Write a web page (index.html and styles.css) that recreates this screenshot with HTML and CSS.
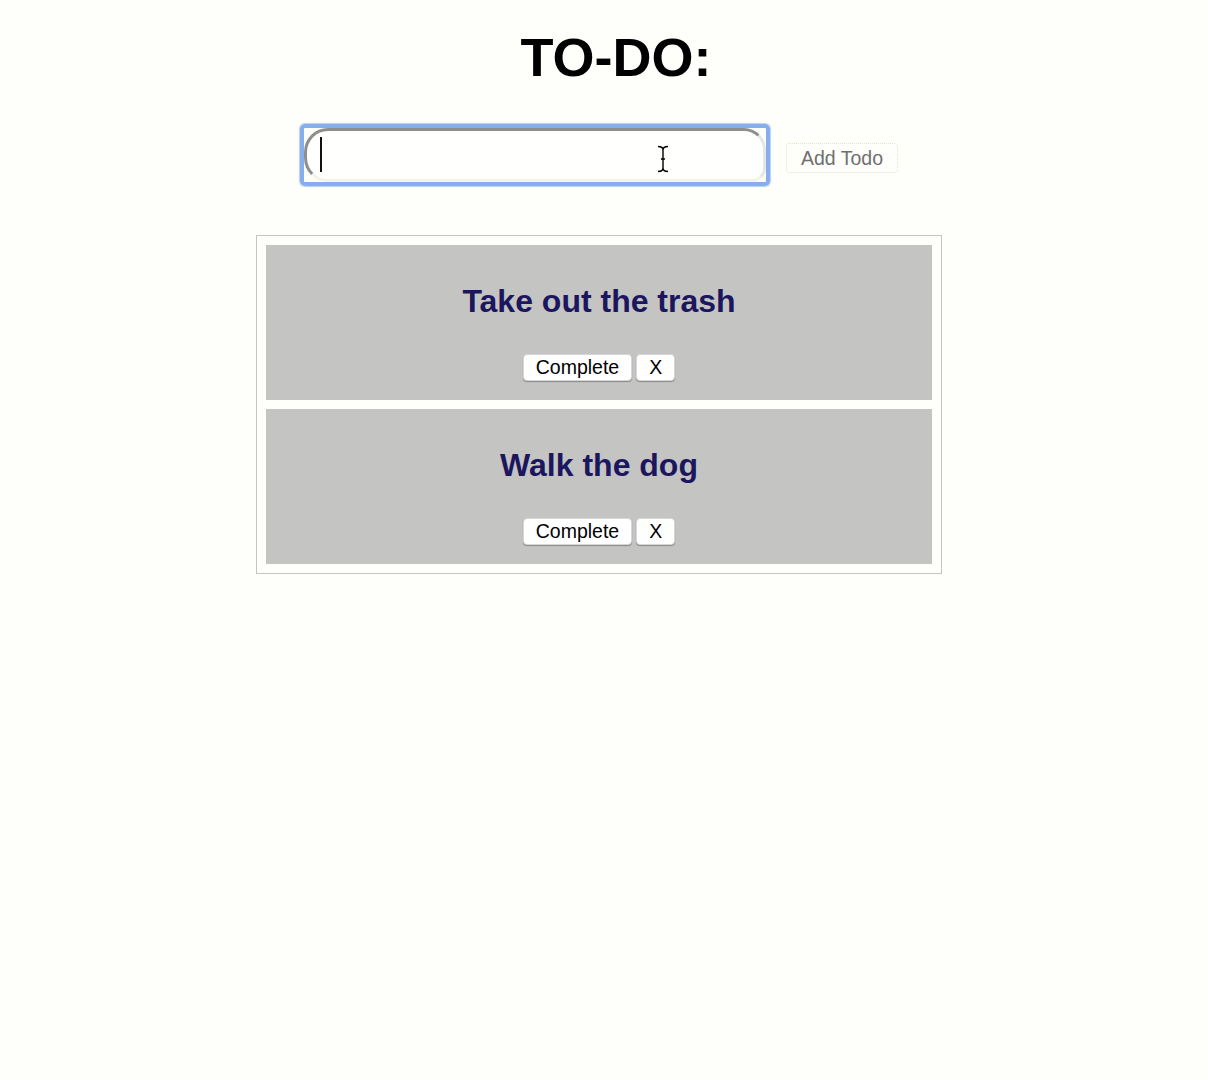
FILE: index.html
```html
<!DOCTYPE html>
<html>
<head>
<meta charset="utf-8">
<link rel="stylesheet" href="styles.css">
</head>
<body>
<div class="app">
  <h1 class="title">TO-DO:</h1>
  <form class="add-row">
    <span class="focus-ring">
      <input class="todo-input" type="text" aria-label="New todo">
      <span class="caret"></span>
      <svg class="ibeam" width="12" height="28" viewBox="0 0 12 28" aria-hidden="true">
        <path d="M1 1.5 C4 1.5 6 2.5 6 5 L6 23 C6 25.5 4 26.5 1 26.5 M11 1.5 C8 1.5 6 2.5 6 5 M6 23 C6 25.5 8 26.5 11 26.5 M4 14 L8 14" fill="none" stroke="#fff" stroke-width="3.2"/>
        <path d="M1 1.5 C4 1.5 6 2.5 6 5 L6 23 C6 25.5 4 26.5 1 26.5 M11 1.5 C8 1.5 6 2.5 6 5 M6 23 C6 25.5 8 26.5 11 26.5 M4 14 L8 14" fill="none" stroke="#000" stroke-width="1.4"/>
      </svg>
    </span>
    <button type="button" class="add-btn">Add Todo</button>
  </form>
  <div class="list">
    <div class="item">
      <h2 class="item-title">Take out the trash</h2>
      <div class="actions">
        <button type="button" class="btn">Complete</button>
        <button type="button" class="btn">X</button>
      </div>
    </div>
    <div class="item">
      <h2 class="item-title">Walk the dog</h2>
      <div class="actions">
        <button type="button" class="btn">Complete</button>
        <button type="button" class="btn">X</button>
      </div>
    </div>
  </div>
</div>
</body>
</html>
```

FILE: styles.css
```css
html, body {
  margin: 0;
  padding: 0;
  background: #fefefa;
}
body {
  font-family: "Liberation Sans", Arial, Helvetica, sans-serif;
  padding-right: 10px;
}
.app {
  display: flex;
  flex-direction: column;
  align-items: center;
}
.title {
  margin: 26px 0 0;
  padding-left: 34px;
  font-size: 54px;
  line-height: 62px;
  font-weight: bold;
  color: #000;
}
.add-row {
  display: flex;
  align-items: flex-start;
  gap: 16px;
  margin: 36px 0 0;
}
.focus-ring {
  position: relative;
  display: block;
  border: 4px solid #86adec;
  border-radius: 5px;
  box-shadow: 0 0 1px 1px #b9d0f5;
}
.todo-input {
  display: block;
  box-sizing: border-box;
  width: 462px;
  height: 54px;
  margin: 0;
  padding: 0 16px;
  border: 3px solid #8e8e8e;
  border-right-color: #e6e6e6;
  border-bottom-color: #f2f2f2;
  border-radius: 24px 22px 14px 24px;
  background: #fffffd;
  font-size: 28px;
  font-family: "Liberation Sans", Arial, sans-serif;
  outline: none;
}
.caret {
  position: absolute;
  left: 16px;
  top: 9px;
  width: 2px;
  height: 35px;
  background: #111;
}
.ibeam {
  position: absolute;
  left: 353px;
  top: 17px;
}
.add-btn {
  margin-top: 19px;
  height: 30px;
  padding: 0 14px;
  border: 1px dotted #e2e2cc;
  border-radius: 4px;
  background: #fefefa;
  color: #6f6f6f;
  font-family: "Liberation Sans", Arial, sans-serif;
  font-size: 19.5px;
  line-height: 28px;
}
.list {
  box-sizing: border-box;
  width: 686px;
  margin-top: 49px;
  padding: 9px;
  border: 1px solid #c4c4c4;
  display: flex;
  flex-direction: column;
  gap: 9px;
}
.item {
  background: #c4c4c2;
  padding: 38px 0 19px;
  display: flex;
  flex-direction: column;
  align-items: center;
}
.item-title {
  margin: 0 0 34px;
  font-size: 32px;
  line-height: 37px;
  font-weight: bold;
  color: #1b165e;
}
.actions {
  display: flex;
  gap: 4px;
}
.btn {
  height: 27px;
  padding: 0 12px;
  border: 1px solid #d6d6d6;
  border-radius: 4px;
  background: #fff;
  box-shadow: 0 1px 1px rgba(0,0,0,0.3);
  color: #000;
  font-family: "Liberation Sans", Arial, sans-serif;
  font-size: 19.5px;
  line-height: 25px;
}
```
